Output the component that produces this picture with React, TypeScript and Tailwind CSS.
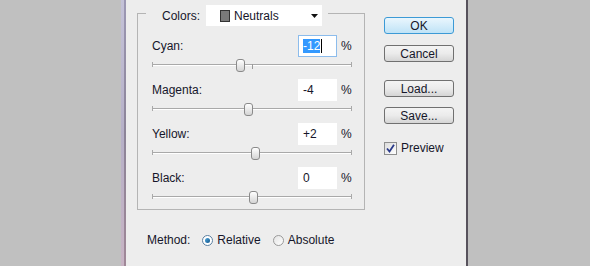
const rows = [
  { label: "Cyan:", value: "-12", thumb: 84, focused: true },
  { label: "Magenta:", value: "-4", thumb: 92, focused: false },
  { label: "Yellow:", value: "+2", thumb: 99, focused: false },
  { label: "Black:", value: "0", thumb: 97, focused: false },
];

const Slider = ({ thumb }: { thumb: number }) => (
  <div className="relative mt-[2px] h-[12px] w-full">
    <div className="absolute left-0 right-0 top-[5px] h-[2px] border-b border-white bg-[#a9a9a9]" />
    <div className="absolute left-0 top-[3px] h-[5px] w-[1px] bg-[#a9a9a9]" />
    <div className="absolute right-0 top-[3px] h-[5px] w-[1px] bg-[#a9a9a9]" />
    <div className="absolute left-[100px] top-[5px] h-[5px] w-[1px] bg-[#9a9a9a]" />
    <div
      className="absolute top-0 h-[13px] w-[9px] rounded-[3px] border border-[#8a8a8a] bg-gradient-to-b from-white to-[#d4d4d4]"
      style={{ left: thumb }}
    />
  </div>
);

const Button = ({ children, primary }: { children: string; primary?: boolean }) => (
  <div
    className={`flex h-[17px] w-[70px] items-center justify-center rounded-[3px] border leading-none ${
      primary
        ? "border-[#3c9ad6] bg-gradient-to-b from-[#eaf6fd] to-[#bfe3f7]"
        : "border-[#707070] bg-gradient-to-b from-[#f4f4f4] via-[#ebebeb] to-[#d5d5d5]"
    }`}
  >
    {children}
  </div>
);

const Radio = ({ checked }: { checked?: boolean }) => (
  <div
    className={`flex h-[11px] w-[11px] items-center justify-center rounded-full border ${
      checked ? "border-[#5b7fa0] bg-white" : "border-[#9a9a9a] bg-gradient-to-br from-[#e4e4e4] to-white"
    }`}
  >
    {checked && (
      <div className="h-[5px] w-[5px] rounded-full bg-gradient-to-br from-[#4fa8dc] to-[#11558c]" />
    )}
  </div>
);

export default function App() {
  return (
    <div className="flex h-[266px] w-[590px] overflow-hidden bg-[#c0c0c0] font-['Liberation_Sans',Arial,sans-serif] text-[12px] text-[#16162a]">
      <div className="w-[121px] shrink-0" />
      <div className="flex w-[5px] shrink-0">
        <div className="w-[3px] bg-gradient-to-b from-[#c4c2d8] via-[#b6b0c8] to-[#c8b4c4]" />
        <div className="w-[2px] bg-gradient-to-b from-[#9c98b4] via-[#8c8498] to-[#a08898]" />
      </div>

      <div className="flex w-[340px] shrink-0 bg-[#ededed] pl-[11px] pt-[13px]">
        <div className="w-[228px] shrink-0">
          <div className="relative h-[197px] border border-[#b4b4b4] pl-[14px] pr-[12px] pt-[21px]">
            <div className="absolute left-[8px] top-[-9px] flex h-[21px] items-center bg-[#ededed] pl-[16px] pr-[6px]">
              <span>Colors:</span>
              <div className="ml-[6px] flex h-[21px] w-[116px] items-center bg-white pl-[14px]">
                <div className="h-[12px] w-[10px] border border-[#333] bg-[#7a7a7a]" />
                <span className="ml-[4px]">Neutrals</span>
                <svg className="ml-auto mr-[4px]" width="7" height="4" viewBox="0 0 7 4">
                  <path d="M0 0h7L3.5 4z" fill="#111" />
                </svg>
              </div>
            </div>

            <div className="flex flex-col gap-[8px]">
              {rows.map((r) => (
                <div key={r.label}>
                  <div className="flex h-[22px] items-center">
                    <span className="flex-1">{r.label}</span>
                    <div
                      className={`flex h-[22px] w-[39px] items-center border bg-white pl-[4px] ${
                        r.focused ? "border-[#8cbcec]" : "border-white"
                      }`}
                    >
                      {r.focused ? (
                        <>
                          <span className="bg-[#3399ff] text-white leading-[14px]">{r.value}</span>
                          <span className="ml-[1px] h-[14px] w-[1px] bg-black" />
                        </>
                      ) : (
                        <span>{r.value}</span>
                      )}
                    </div>
                    <span className="ml-[4px] w-[11px]">%</span>
                  </div>
                  <Slider thumb={r.thumb} />
                </div>
              ))}
            </div>
          </div>

          <div className="mt-[20px] flex h-[20px] items-center pl-[10px]">
            <span>Method:</span>
            <div className="ml-[12px]">
              <Radio checked />
            </div>
            <span className="ml-[4px]">Relative</span>
            <div className="ml-[12px]">
              <Radio />
            </div>
            <span className="ml-[4px]">Absolute</span>
          </div>
        </div>

        <div className="ml-[19px] flex flex-col pt-[4px]">
          <Button primary>OK</Button>
          <div className="mt-[11px]">
            <Button>Cancel</Button>
          </div>
          <div className="mt-[18px]">
            <Button>Load...</Button>
          </div>
          <div className="mt-[10px]">
            <Button>Save...</Button>
          </div>
          <div className="mt-[15px] flex items-center">
            <div className="flex h-[13px] w-[13px] items-center justify-center border border-[#8e8f8f] bg-gradient-to-br from-[#dcdcdc] to-white">
              <svg width="9" height="9" viewBox="0 0 9 9">
                <path d="M1 4.5l2.5 3L8 0.8" fill="none" stroke="#2a3a8a" strokeWidth="1.8" />
              </svg>
            </div>
            <span className="ml-[4px]">Preview</span>
          </div>
        </div>
      </div>

      <div className="w-[2px] shrink-0 bg-[#57525c]" />
      <div className="flex-1" />
    </div>
  );
}
